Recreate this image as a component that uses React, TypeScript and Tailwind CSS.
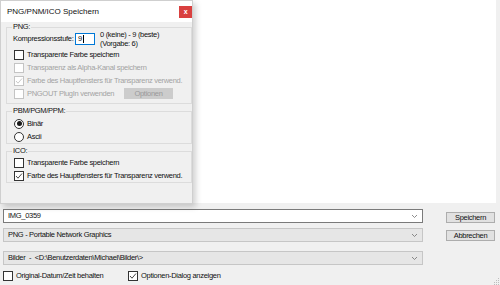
import type { ReactNode } from "react";

const font = { fontFamily: '"Liberation Sans", Arial, sans-serif' };

function Check({ checked = false, disabled = false }: { checked?: boolean; disabled?: boolean }) {
  return (
    <span
      className={`flex h-[10px] w-[10px] shrink-0 items-center justify-center border bg-white ${
        disabled ? "border-[#c4c4c4]" : "border-[#333333]"
      }`}
    >
      {checked ? (
        <svg width="8" height="8" viewBox="0 0 8 8">
          <polyline
            points="1,4 3,6.2 7,1.5"
            fill="none"
            stroke={disabled ? "#c4c4c4" : "#333333"}
            strokeWidth="0.9"
          />
        </svg>
      ) : null}
    </span>
  );
}

function Radio({ checked = false }: { checked?: boolean }) {
  return (
    <span className="flex h-[10px] w-[10px] shrink-0 items-center justify-center rounded-full border border-[#333333] bg-white">
      {checked ? <span className="h-[5px] w-[5px] rounded-full bg-[#1a1a1a]" /> : null}
    </span>
  );
}

function Row({ children, disabled = false }: { children: ReactNode; disabled?: boolean }) {
  return (
    <div
      className={`flex h-[13px] items-center gap-[3px] whitespace-nowrap pl-[7px] ${
        disabled ? "text-[#a3a3a3]" : "text-[#111]"
      }`}
    >
      {children}
    </div>
  );
}

function Group({ label, className, children }: { label: string; className: string; children: ReactNode }) {
  return (
    <div className={`relative ml-[5px] w-[186px] border border-[#dcdcdc] ${className}`}>
      <span className="absolute left-[5px] top-[-6px] whitespace-nowrap bg-[#f0f0f0] px-px leading-[9px] text-[#111]">
        {label}
      </span>
      {children}
    </div>
  );
}

function Chevron() {
  return (
    <svg width="7" height="5" viewBox="0 0 7 5" className="shrink-0">
      <polyline points="1,1 3.5,3.5 6,1" fill="none" stroke="#707070" strokeWidth="0.8" />
    </svg>
  );
}

function Combo({ text, white = false, className = "" }: { text: string; white?: boolean; className?: string }) {
  return (
    <div
      className={`flex h-[14px] w-[420px] items-center justify-between border pl-[4px] pr-[4px] ${
        white ? "border-[#7a7a7a] bg-white" : "border-[#c6c6c6] bg-[#e6e6e6]"
      } ${className}`}
    >
      <span className="whitespace-pre">{text}</span>
      <Chevron />
    </div>
  );
}

function Button({ label, className = "" }: { label: string; className?: string }) {
  return (
    <div
      className={`flex h-[11px] w-[49px] items-center justify-center border border-[#adadad] bg-[#e1e1e1] ${className}`}
    >
      {label}
    </div>
  );
}

export default function App() {
  return (
    <div
      className="relative h-[285px] w-[500px] overflow-hidden bg-[#f0f0f0] text-[7.5px] tracking-[-0.3px] text-[#111]"
      style={font}
    >
      <div className="h-[203px] w-[496px] bg-white" />

      <div className="flex flex-col pl-[3px] pt-[6px]">
        <div className="flex">
          <div className="flex flex-col">
            <Combo text="IMG_0359" white />
            <Combo text="PNG - Portable Network Graphics" className="mt-[5px]" />
            <Combo text="Bilder  -  <D:\Benutzerdaten\Michael\Bilder\>" className="mt-[9px]" />
          </div>
          <div className="ml-[23px] flex flex-col pt-[3px]">
            <Button label="Speichern" />
            <Button label="Abbrechen" className="mt-[7px]" />
          </div>
        </div>
        <div className="mt-[4px] flex h-[14px] items-center whitespace-nowrap">
          <Check />
          <span className="ml-[3px] w-[112px]">Original-Datum/Zeit behalten</span>
          <Check checked />
          <span className="ml-[3px]">Optionen-Dialog anzeigen</span>
        </div>
      </div>

      <svg className="absolute bottom-0 right-0" width="8" height="8" viewBox="0 0 8 8">
        <rect x="6" y="1" width="1" height="1" fill="#bdbdbd" />
        <rect x="4" y="3" width="1" height="1" fill="#bdbdbd" />
        <rect x="6" y="3" width="1" height="1" fill="#bdbdbd" />
        <rect x="2" y="5" width="1" height="1" fill="#bdbdbd" />
        <rect x="4" y="5" width="1" height="1" fill="#bdbdbd" />
        <rect x="6" y="5" width="1" height="1" fill="#bdbdbd" />
        <rect x="2" y="7" width="1" height="1" fill="#bdbdbd" />
        <rect x="4" y="7" width="1" height="1" fill="#bdbdbd" />
        <rect x="6" y="7" width="1" height="1" fill="#bdbdbd" />
      </svg>

      {/* dialog window */}
      <div className="absolute left-0 top-0 flex h-[204px] w-[193px] flex-col border border-[#cfcfcf] bg-[#f0f0f0] shadow-[3px_3px_6px_rgba(0,0,0,0.18)]">
        <div className="flex h-[21px] items-center justify-between bg-white pl-[6px] pr-0">
          <span className="whitespace-nowrap text-[8px] tracking-normal">PNG/PNM/ICO Speichern</span>
          <span className="flex h-[12px] w-[13px] items-center justify-center bg-[#d9403f] text-[7px] font-bold leading-none text-white">
            x
          </span>
        </div>

        <Group label="PNG:" className="mt-[5px] pb-[3px] pt-[2px]">
          <div className="flex h-[18px] items-center whitespace-nowrap pl-[6px]">
            <span className="w-[62px]">Kompressionsstufe:</span>
            <span className="flex h-[12px] w-[20px] items-center border border-[#0078d7] bg-white pl-[2px]">
              9<span className="ml-px h-[8px] w-px bg-black" />
            </span>
            <div className="ml-[5px] flex flex-col leading-[9px]">
              <span>0 (keine) - 9 (beste)</span>
              <span>(Vorgabe: 6)</span>
            </div>
          </div>
          <Row>
            <Check />
            Transparente Farbe speichern
          </Row>
          <Row disabled>
            <Check disabled />
            Transparenz als Alpha-Kanal speichern
          </Row>
          <Row disabled>
            <Check checked disabled />
            Farbe des Hauptfensters für Transparenz verwend.
          </Row>
          <Row disabled>
            <Check disabled />
            <span className="w-[94px]">PNGOUT PlugIn verwenden</span>
            <span className="flex h-[11px] w-[49px] items-center justify-center border border-[#cccccc] bg-[#cccccc] text-[#9a9a9a]">
              Optionen
            </span>
          </Row>
        </Group>

        <Group label="PBM/PGM/PPM:" className="mt-[7px] pt-[5px]">
          <Row>
            <Radio checked />
            Binär
          </Row>
          <Row>
            <Radio />
            Ascii
          </Row>
        </Group>

        <Group label="ICO:" className="mt-[7px] pt-[4px]">
          <Row>
            <Check />
            Transparente Farbe speichern
          </Row>
          <Row>
            <Check checked />
            Farbe des Hauptfensters für Transparenz verwend.
          </Row>
        </Group>
      </div>
    </div>
  );
}
